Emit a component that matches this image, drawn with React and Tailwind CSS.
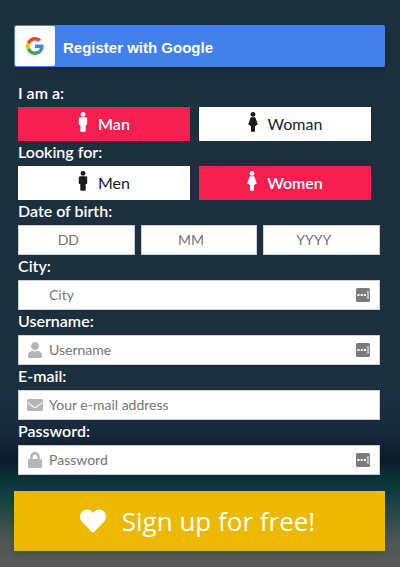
import { useState } from "react";
import { FaHeart, FaUser, FaEnvelope, FaLock } from "react-icons/fa";

const fields = [
  { id: "city", label: "City:", placeholder: "City", type: "text", helper: true },
  { id: "username", label: "Username:", placeholder: "Username", type: "text", icon: FaUser, helper: true },
  { id: "email", label: "E-mail:", placeholder: "Your e-mail address", type: "email", icon: FaEnvelope },
  { id: "password", label: "Password:", placeholder: "Password", type: "password", icon: FaLock, helper: true },
];

const dateParts = [
  { id: "DD", label: "Day" },
  { id: "MM", label: "Month" },
  { id: "YYYY", label: "Year" },
];

function GoogleLogo() {
  return (
    <svg viewBox="0 0 48 48" className="size-[18px]" aria-hidden="true">
      <path fill="#EA4335" d="M24 9.5c3.54 0 6.71 1.22 9.21 3.6l6.85-6.85C35.9 2.38 30.47 0 24 0 14.62 0 6.51 5.38 2.56 13.22l7.98 6.19C12.43 13.72 17.74 9.5 24 9.5z" />
      <path fill="#4285F4" d="M46.98 24.55c0-1.57-.15-3.09-.38-4.55H24v9.02h12.94c-.58 2.96-2.26 5.48-4.78 7.18l7.73 6c4.51-4.18 7.09-10.36 7.09-17.65z" />
      <path fill="#FBBC05" d="M10.53 28.59c-.48-1.45-.76-2.99-.76-4.59s.27-3.14.76-4.59l-7.98-6.19C.92 16.46 0 20.12 0 24c0 3.88.92 7.54 2.56 10.78l7.97-6.19z" />
      <path fill="#34A853" d="M24 48c6.48 0 11.93-2.13 15.89-5.81l-7.73-6c-2.15 1.45-4.92 2.3-8.16 2.3-6.26 0-11.57-4.22-13.47-9.91l-7.98 6.19C6.51 42.62 14.62 48 24 48z" />
    </svg>
  );
}

function PersonIcon({ female }) {
  return (
    <svg viewBox="0 0 10 20" className="h-5 w-[10px]" fill="currentColor" aria-hidden="true">
      <circle cx="5" cy="2.4" r="2.4" />
      {female ? (
        <path d="M3.4 5.3h3.2q.8 0 1 .8L9.8 12.600l-1.300.7-.6-.6v1.300H7v5.800H3V14h-.9v-1.300l-.6.6-1.300-.7L2.400 6.100q.2-.8 1-.8z" />
      ) : (
        <path d="M2.300 5.300h5.400q1.500 0 1.500 1.500v5.400q0 .9-1.100.9h-.4V19q0 .8-.8.8H3.100q-.8 0-.8-.8v-5.900h-.4q-1.100 0-1.100-.9V6.800q0-1.500 1.500-1.500z" />
      )}
    </svg>
  );
}

// Little grey keyboard badge at the end of a field
function AutofillButton() {
  return (
    <button type="button" aria-label="Autofill" className="size-[14px] shrink-0">
      <svg viewBox="0 0 14 14" className="size-[14px]" aria-hidden="true">
        <rect width="14" height="14" rx="1.5" fill="#7b7b7b" />
        <path fill="#fff" d="M1.500 6h2v2h-2zM4.700 6h2v2h-2zM7.900 6h2v2h-2zM11.500 4h1v6h-1z" />
        <path fill="#cfcfcf" d="M10.500 3.500h3v1h-3zM10.500 9.500h3v1h-3z" />
      </svg>
    </button>
  );
}

function GenderChoice({ legend, name, options, value, onChange }) {
  return (
    <fieldset>
      <legend className="h-[25px] leading-[22px] font-semibold text-white">{legend}</legend>
      <div className="grid grid-cols-2 gap-[9px] pr-[9px]">
        {options.map((option, i) => (
          <label
            key={option}
            className={`relative flex h-[34px] cursor-pointer items-center justify-center gap-[10px] ${
              value === option ? "bg-[#f51f50] font-semibold text-white" : "bg-white text-[#1b1b1d]"
            }`}
          >
            <input
              type="radio"
              name={name}
              value={option}
              checked={value === option}
              onChange={() => onChange(option)}
              className="sr-only"
            />
            <span className="pb-1">
              <PersonIcon female={i === 1} />
            </span>
            <span className="pb-px">{option}</span>
          </label>
        ))}
      </div>
    </fieldset>
  );
}

export default function App() {
  const [gender, setGender] = useState("Man");
  const [lookingFor, setLookingFor] = useState("Women");

  return (
    <main className="min-h-screen bg-[linear-gradient(#1b2f3d_0%,#1b2f3e_70%,#162a3c_76%,#0b1b2a_81%,#093034_84%,#0d3f40_87%,#2c4a48_91%,#4c5552_95%,#5a5b59_100%)] pt-[25px] pr-[15px] pb-4 pl-[14px] font-['Lato','Open_Sans',sans-serif] text-base">
      <form onSubmit={(e) => e.preventDefault()}>
        <button
          type="button"
          className="flex h-[42px] w-full items-center rounded-xs bg-[#4280ec] p-px font-['Liberation_Sans',sans-serif] text-[15px] font-bold text-white shadow-md"
        >
          <span className="flex size-10 items-center justify-center rounded-xs bg-white">
            <GoogleLogo />
          </span>
          <span className="pt-1 pl-2">Register with Google</span>
        </button>

        <div className="pt-[15px] pr-[5px] pl-1">
          <GenderChoice legend="I am a:" name="gender" options={["Man", "Woman"]} value={gender} onChange={setGender} />
          <GenderChoice
            legend="Looking for:"
            name="looking"
            options={["Men", "Women"]}
            value={lookingFor}
            onChange={setLookingFor}
          />

          <fieldset>
            <legend className="h-[25px] leading-[22px] font-semibold text-white">Date of birth:</legend>
            <div className="grid grid-cols-3 gap-[6px]">
              {dateParts.map((part) => (
                <input
                  key={part.id}
                  type="text"
                  inputMode="numeric"
                  aria-label={part.label}
                  placeholder={part.id}
                  className="h-[30px] w-full min-w-0 border border-[#ccd1d4] bg-white pr-4 pb-px text-center text-sm text-[#333] outline-none placeholder:text-[#757575]"
                />
              ))}
            </div>
          </fieldset>

          {fields.map(({ id, label, placeholder, type, icon: Icon, helper }) => (
            <div key={id}>
              <label htmlFor={id} className="block h-[25px] leading-[22px] font-semibold text-white">
                {label}
              </label>
              <div className="flex h-[30px] items-center border border-[#ccd1d4] bg-white pr-[9px] pl-2">
                <span className="flex w-[22px] shrink-0 text-[#b5b5b7]">{Icon && <Icon size={16} />}</span>
                <input
                  id={id}
                  type={type}
                  placeholder={placeholder}
                  className="h-full min-w-0 flex-1 pb-px text-sm text-[#333] outline-none placeholder:text-[#757575]"
                />
                {helper && <AutofillButton />}
              </div>
            </div>
          ))}
        </div>

        <button
          type="submit"
          className="mt-4 flex h-[60px] w-full items-center justify-center gap-4 bg-[#ecb900] pr-1 font-['Open_Sans',sans-serif] text-[26px] text-white shadow-md"
        >
          <FaHeart size={26} />
          Sign up for free!
        </button>
      </form>
    </main>
  );
}
